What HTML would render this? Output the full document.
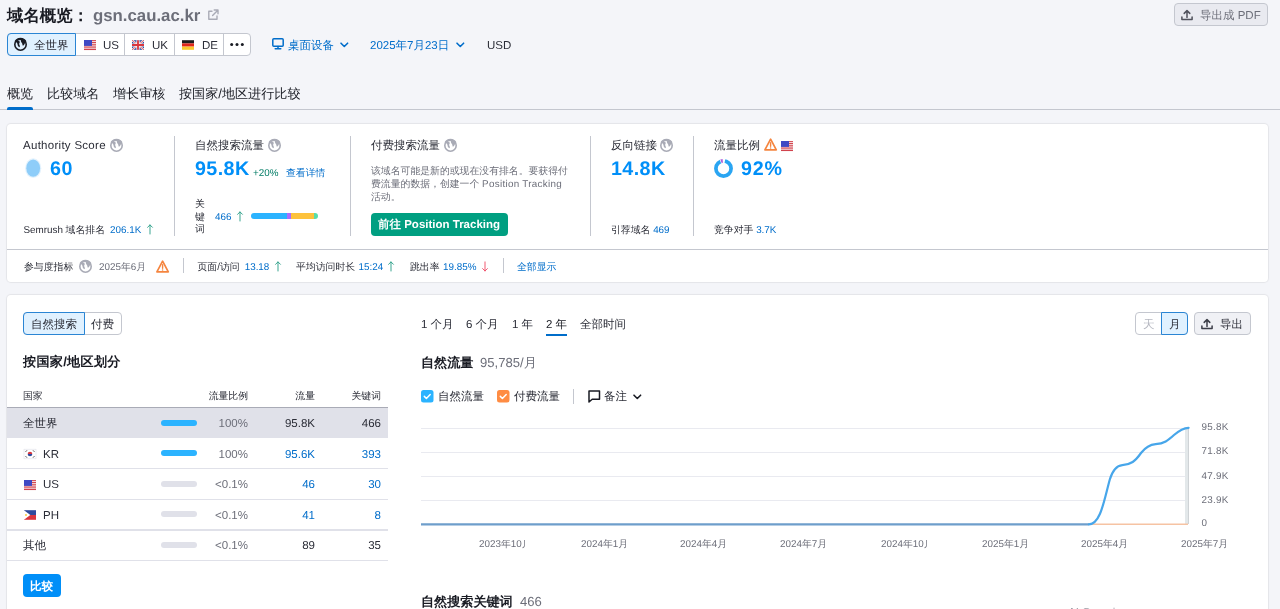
<!DOCTYPE html>
<html lang="zh">
<head>
<meta charset="utf-8">
<title>域名概览</title>
<style>
*{box-sizing:border-box;margin:0;padding:0}
html,body{width:1280px;height:609px;overflow:hidden;background:#f4f5f9}
body{will-change:transform;text-rendering:geometricPrecision;font-family:"Liberation Sans",sans-serif;color:#191b23;position:relative;font-size:11.5px}
.a{position:absolute;white-space:nowrap;line-height:1}
.card{position:absolute;background:#fff;border-radius:4px;box-shadow:0 0 1px 1px rgba(25,27,35,.07)}
.d{color:#2b2d37}
.g{color:#6c6e79}
.b{color:#006dca}
.bb{color:#008ff8;font-weight:bold;font-size:19.7px}
.vd{position:absolute;width:1px;background:#c4c7cf}
.hd{position:absolute;height:1px;background:#c4c7cf}
.up{color:#009f81}
.f14{font-size:11.5px}
.f12{font-size:9.85px}
svg{position:absolute;overflow:visible}
</style>
</head>
<body>

<!-- ===== header ===== -->
<div class="a" id="t1" style="left:7px;top:8px;font-size:16.4px;font-weight:bold">域名概览：</div>
<div class="a" id="t2" style="left:93px;top:8px;font-size:16.8px;font-weight:bold;color:#6c6e79">gsn.cau.ac.kr</div>

<!-- region buttons -->
<div class="a" id="rg" style="left:7px;top:33px;width:244px;height:23px;background:#fff;border:1px solid #c4c7cf;border-radius:4px"></div>
<div class="a" id="rg1" style="left:7px;top:33px;width:69px;height:23px;background:#e0f1ff;border:1px solid #2a85d4;border-radius:4px 0 0 4px"></div>
<div class="vd" style="left:124px;top:34px;height:21px"></div>
<div class="vd" style="left:174px;top:34px;height:21px"></div>
<div class="vd" style="left:223px;top:34px;height:21px"></div>
<div class="a d" style="left:34px;top:41px">全世界</div>
<div class="a d" style="left:103px;top:41px">US</div>
<div class="a d" style="left:152px;top:41px">UK</div>
<div class="a d" style="left:202px;top:41px">DE</div>

<div class="a b" style="left:288px;top:41px">桌面设备</div>
<div class="a b" style="left:370px;top:41px">2025年7月23日</div>
<div class="a d" style="left:487px;top:41px">USD</div>

<!-- export pdf -->
<div class="a" style="left:1174px;top:3px;width:94px;height:23px;background:#e9eaf0;border:1px solid #c4c7cf;border-radius:4px"></div>
<div class="a" style="left:1200px;top:11px;color:#6c6e79">导出成 PDF</div>

<!-- tabs -->
<div class="a" style="left:7px;top:87px;font-size:13.1px">概览</div>
<div class="a" style="left:47px;top:87px;font-size:13.1px">比较域名</div>
<div class="a" style="left:113px;top:87px;font-size:13.1px">增长审核</div>
<div class="a" style="left:179px;top:87px;font-size:13.1px">按国家/地区进行比较</div>
<div class="hd" style="left:0;top:109px;width:1280px;background:#c4c7cf"></div>
<div class="a" style="left:7px;top:107px;width:26px;height:3px;background:#006dca;border-radius:2px 2px 0 0"></div>

<!-- ===== card 1 ===== -->
<div class="card" style="left:7px;top:124px;width:1261px;height:158px"></div>
<div class="hd" style="left:7px;top:249px;width:1261px"></div>
<div class="vd" style="left:174px;top:136px;height:100px"></div>
<div class="vd" style="left:350px;top:136px;height:100px"></div>
<div class="vd" style="left:590px;top:136px;height:100px"></div>
<div class="vd" style="left:693px;top:136px;height:100px"></div>

<div class="a d" style="left:23px;top:141px;letter-spacing:.28px">Authority Score</div>
<div class="a bb" style="left:50px;top:160px;letter-spacing:.5px">60</div>
<div class="a d f12" style="left:23.5px;top:226px">Semrush 域名排名</div>
<div class="a b f12" style="left:110px;top:226px">206.1K</div>
<svg style="left:146.600px;top:224.400px;color:#2fa08a" width="6" height="10.500"><use href="#arr"/></svg>

<div class="a d" style="left:195px;top:141px">自然搜索流量</div>
<div class="a bb" style="left:195px;top:160px;letter-spacing:.4px">95.8K</div>
<div class="a f12" style="left:253px;top:169px;color:#007c65">+20%</div>
<div class="a b f12" style="left:286px;top:169px">查看详情</div>
<div class="a d f12" style="left:195px;top:199px;line-height:12.7px;white-space:normal;width:10px">关键词</div>
<div class="a b f12" style="left:215px;top:213px">466</div>
<svg style="left:237.200px;top:211.200px;color:#2fa08a" width="6" height="10.500"><use href="#arr"/></svg>
<div class="a" style="left:251px;top:213px;width:67px;height:6px;border-radius:3px;background:linear-gradient(90deg,#2bb3ff 0 54%,#ab6cfe 54% 60%,#fdc23c 60% 94%,#59ddaa 94%)"></div>

<div class="a d" style="left:371px;top:141px">付费搜索流量</div>
<div class="a g f12" style="left:371px;top:165px;line-height:13px;white-space:normal;width:215px">该域名可能是新的或现在没有排名。要获得付<br>费流量的数据，创建一个 <span style="letter-spacing:.3px">Position Tracking</span><br>活动。</div>
<div class="a" style="left:371px;top:213px;width:137px;height:23px;border-radius:4px;background:#009f81"></div>
<div class="a" style="left:378px;top:220px;font-size:11.5px;font-weight:bold;color:#fff">前往 Position Tracking</div>

<div class="a d" style="left:611px;top:141px">反向链接</div>
<div class="a bb" style="left:611px;top:160px;letter-spacing:.4px">14.8K</div>
<div class="a d f12" style="left:611px;top:226px">引荐域名 <span class="b">469</span></div>

<div class="a d" style="left:714px;top:141px">流量比例</div>
<div class="a bb" style="left:741px;top:160px;letter-spacing:.8px">92%</div>
<div class="a d f12" style="left:714px;top:226px">竞争对手 <span class="b">3.7K</span></div>

<!-- engagement row -->
<div class="a d f12" style="left:24px;top:263px">参与度指标</div>
<div class="a g f12" style="left:99px;top:263px">2025年6月</div>
<div class="vd" style="left:183px;top:258px;height:15px"></div>
<div class="a d f12" style="left:197.5px;top:263px">页面/访问</div>
<div class="a b f12" style="left:244.7px;top:263px">13.18</div>
<svg style="left:274.500px;top:261px;color:#2fa08a" width="6" height="10.500"><use href="#arr"/></svg>
<div class="a d f12" style="left:296px;top:263px">平均访问时长</div>
<div class="a b f12" style="left:358.5px;top:263px">15:24</div>
<svg style="left:388.400px;top:261px;color:#2fa08a" width="6" height="10.500"><use href="#arr"/></svg>
<div class="a d f12" style="left:410px;top:263px">跳出率</div>
<div class="a b f12" style="left:443px;top:263px">19.85%</div>
<svg style="left:482px;top:261px;color:#f0506a" width="6" height="10.500"><g transform="translate(0,10.900) scale(1,-1)"><use href="#arr"/></g></svg>
<div class="vd" style="left:503px;top:258px;height:15px"></div>
<div class="a b f12" style="left:517px;top:263px">全部显示</div>

<!-- ===== card 2 ===== -->
<div class="card" style="left:7px;top:295px;width:1261px;height:330px"></div>

<!-- left panel -->
<div class="a" style="left:23px;top:312px;width:99px;height:23px;background:#fff;border:1px solid #c4c7cf;border-radius:4px"></div>
<div class="a" style="left:23px;top:312px;width:62px;height:23px;background:#e0f1ff;border:1px solid #2a85d4;border-radius:4px 0 0 4px"></div>
<div class="a d" style="left:31px;top:320px">自然搜索</div>
<div class="a d" style="left:91px;top:320px">付费</div>
<div class="a" style="left:23px;top:355px;font-size:13.1px;font-weight:bold;letter-spacing:.3px">按国家/地区划分</div>

<div class="a d f12" style="left:23px;top:392px">国家</div>
<div class="a d f12" style="right:1032px;top:392px">流量比例</div>
<div class="a d f12" style="right:965px;top:392px">流量</div>
<div class="a d f12" style="right:899px;top:392px">关键词</div>

<div class="a" style="left:7px;top:408px;width:381px;height:30px;background:#e0e1e9"></div>
<div class="hd" style="left:7px;top:407px;width:381px;background:#a9abb6"></div>
<div class="hd" style="left:7px;top:468px;width:381px;background:#e0e1e9"></div>
<div class="hd" style="left:7px;top:499px;width:381px;background:#e0e1e9"></div>
<div class="hd" style="left:7px;top:529px;width:381px;height:2px;background:#e0e1e9"></div>
<div class="hd" style="left:7px;top:560px;width:381px;background:#e0e1e9"></div>

<!-- rows -->
<div class="a d" style="left:23px;top:419px">全世界</div>
<div class="a d" style="left:43px;top:450px">KR</div>
<div class="a d" style="left:43px;top:480px">US</div>
<div class="a d" style="left:43px;top:511px">PH</div>
<div class="a d" style="left:23px;top:541px">其他</div>

<div class="a" style="left:161px;top:420px;width:36px;height:6px;border-radius:3px;background:#2bb3ff"></div>
<div class="a" style="left:161px;top:450px;width:36px;height:6px;border-radius:3px;background:#2bb3ff"></div>
<div class="a" style="left:161px;top:481px;width:36px;height:6px;border-radius:3px;background:#e0e1e9"></div>
<div class="a" style="left:161px;top:511px;width:36px;height:6px;border-radius:3px;background:#e0e1e9"></div>
<div class="a" style="left:161px;top:542px;width:36px;height:6px;border-radius:3px;background:#e0e1e9"></div>

<div class="a g" style="right:1032px;top:419px">100%</div>
<div class="a g" style="right:1032px;top:450px">100%</div>
<div class="a g" style="right:1032px;top:480px">&lt;0.1%</div>
<div class="a g" style="right:1032px;top:511px">&lt;0.1%</div>
<div class="a g" style="right:1032px;top:541px">&lt;0.1%</div>

<div class="a d" style="right:965px;top:419px">95.8K</div>
<div class="a b" style="right:965px;top:450px">95.6K</div>
<div class="a b" style="right:965px;top:480px">46</div>
<div class="a b" style="right:965px;top:511px">41</div>
<div class="a d" style="right:965px;top:541px">89</div>

<div class="a d" style="right:899px;top:419px">466</div>
<div class="a b" style="right:899px;top:450px">393</div>
<div class="a b" style="right:899px;top:480px">30</div>
<div class="a b" style="right:899px;top:511px">8</div>
<div class="a d" style="right:899px;top:541px">35</div>

<div class="a" style="left:23px;top:574px;width:38px;height:23px;border-radius:4px;background:#008ff8"></div>
<div class="a" style="left:30px;top:582px;font-weight:bold;color:#fff">比较</div>

<!-- right panel -->
<div class="a d" style="left:421px;top:320px">1 个月</div>
<div class="a d" style="left:466px;top:320px">6 个月</div>
<div class="a d" style="left:512px;top:320px">1 年</div>
<div class="a" style="left:546px;top:320px">2 年</div>
<div class="a d" style="left:580px;top:320px">全部时间</div>
<div class="a" style="left:545.5px;top:333.5px;width:21.5px;height:2px;background:#006dca"></div>

<div class="a" style="left:1135px;top:312px;width:52.5px;height:23px;background:#fff;border:1px solid #c4c7cf;border-radius:4px"></div>
<div class="a" style="left:1161px;top:312px;width:26.5px;height:23px;background:#e0f1ff;border:1px solid #2a85d4;border-radius:0 4px 4px 0"></div>
<div class="a" style="left:1143px;top:320px;color:#b5b7c0">天</div>
<div class="a d" style="left:1169px;top:320px">月</div>
<div class="a" style="left:1194px;top:312px;width:57px;height:23px;background:#f0f1f5;border:1px solid #c4c7cf;border-radius:4px"></div>
<div class="a d" style="left:1220px;top:320px">导出</div>

<div class="a" style="left:421px;top:356px;font-size:13.1px;font-weight:bold">自然流量</div>
<div class="a g" style="left:480px;top:356px;font-size:13.1px">95,785/月</div>

<div class="a d" style="left:438px;top:392px">自然流量</div>
<div class="a d" style="left:514px;top:392px">付费流量</div>
<div class="vd" style="left:573px;top:389px;height:15px"></div>
<div class="a d" style="left:604px;top:392px">备注</div>

<!-- chart -->
<div class="hd" style="left:421px;top:428px;width:768px;background:#e9eaf0"></div>
<div class="hd" style="left:421px;top:452px;width:768px;background:#e9eaf0"></div>
<div class="hd" style="left:421px;top:476px;width:768px;background:#e9eaf0"></div>
<div class="hd" style="left:421px;top:500px;width:768px;background:#e9eaf0"></div>

<div class="a g f12" style="left:1201.5px;top:423px;letter-spacing:.3px">95.8K</div>
<div class="a g f12" style="left:1201.5px;top:447px;letter-spacing:.3px">71.8K</div>
<div class="a g f12" style="left:1201.5px;top:472px;letter-spacing:.3px">47.9K</div>
<div class="a g f12" style="left:1201.5px;top:496px;letter-spacing:.3px">23.9K</div>
<div class="a g f12" style="left:1201.5px;top:519px;letter-spacing:.3px">0</div>

<div class="a g f12" style="left:479px;top:540px;width:46px;height:12px;overflow:hidden">2023年10月</div>
<div class="a g f12" style="left:581px;top:540px">2024年1月</div>
<div class="a g f12" style="left:680px;top:540px">2024年4月</div>
<div class="a g f12" style="left:780px;top:540px">2024年7月</div>
<div class="a g f12" style="left:881px;top:540px;width:46px;height:12px;overflow:hidden">2024年10月</div>
<div class="a g f12" style="left:982px;top:540px">2025年1月</div>
<div class="a g f12" style="left:1081px;top:540px">2025年4月</div>
<div class="a g f12" style="left:1181px;top:540px">2025年7月</div>

<div class="a" style="left:421px;top:595px;font-size:13.1px;font-weight:bold">自然搜索关键词</div>
<div class="a g" style="left:520px;top:595px;font-size:13.1px">466</div>

<!-- ===== icons ===== -->
<svg width="0" height="0" style="left:0;top:0">
<defs>
<g id="globe">
  <circle cx="6.500" cy="6.500" r="5.700" fill="none" stroke="currentColor" stroke-width="1.600"/>
  <path d="M2 3.400C3.300 2.300 5.300 2.500 5.700 3.700C6 4.700 4.900 5.200 5.200 6.200C5.500 7.200 6.400 7.900 5.500 9.300C4.300 8.800 3.400 7.500 3.500 6.100C3.600 5 2.300 4.600 2 3.400z" fill="currentColor"/>
  <path d="M7 1.300C8.800 1.500 10.600 2.700 11.200 4.400C10.800 5.700 10.100 7.100 8.900 7.700C8.100 6.700 8.700 5.700 7.900 4.900C7.100 4.100 6.400 2.600 7 1.300z" fill="currentColor"/>
  <path d="M1.500 3.800A5.700 5.700 0 0 1 11.500 3.800" fill="none" stroke="currentColor" stroke-width="2.200"/>
</g>
<g id="us">
  <rect width="12" height="9.900" fill="#fff"/>
  <path d="M0 .650h12M0 2.450h12M0 4.250h12M0 6.050h12M0 7.850h12M0 9.550h12" stroke="#cc2f3a" stroke-width=".95"/>
  <rect width="8" height="5.900" fill="#3f49c4"/>
</g>
<g id="warn">
  <path d="M6.600 1.200L12.300 11.800H.9z" fill="#fff" stroke="#f5853f" stroke-width="1.700" stroke-linejoin="round"/>
  <path d="M6.600 4.800v3.400" stroke="#f5853f" stroke-width="1.400" stroke-linecap="round"/>
  <circle cx="6.600" cy="10" r=".8" fill="#f5853f"/>
</g>
<g id="arr">
  <path d="M3 10V.9M.6 3.300L3 .9l2.400 2.400" fill="none" stroke="currentColor" stroke-width=".950" stroke-linecap="round" stroke-linejoin="round"/>
</g>
<g id="exp">
  <path d="M6 8.500V1.800M3.200 4.400L6 1.600l2.800 2.800" fill="none" stroke="currentColor" stroke-width="1.500" stroke-linecap="round" stroke-linejoin="round"/>
  <path d="M.9 8v2.600h10.200V8" fill="none" stroke="currentColor" stroke-width="1.500" stroke-linecap="round" stroke-linejoin="round"/>
</g>
<g id="chev">
  <path d="M1 1.200l3.300 3.300 3.300-3.300" fill="none" stroke="currentColor" stroke-width="1.600" stroke-linecap="round" stroke-linejoin="round"/>
</g>
<g id="chk">
  <rect width="12.500" height="12.500" rx="2.500" fill="currentColor"/>
  <path d="M3.300 6.400l2.100 2.100 3.800-4" fill="none" stroke="#fff" stroke-width="1.500" stroke-linecap="round" stroke-linejoin="round"/>
</g>
</defs>
</svg>

<!-- header icons -->
<svg style="left:14px;top:38px;color:#191b23" width="13" height="13"><use href="#globe"/></svg>
<svg style="left:83.500px;top:39.900px" width="12" height="10"><use href="#us"/></svg>
<svg style="left:132.300px;top:40.200px" width="12" height="10" viewBox="0 0 12 9.600">
  <rect width="12" height="9.600" fill="#2e4a9e"/>
  <path d="M0 0l12 9.600M12 0L0 9.600" stroke="#fff" stroke-width="2"/>
  <path d="M0 0l12 9.600M12 0L0 9.600" stroke="#d9363e" stroke-width=".8"/>
  <path d="M6 0v9.600M0 4.800h12" stroke="#fff" stroke-width="3.200"/>
  <path d="M6 0v9.600M0 4.800h12" stroke="#d9363e" stroke-width="1.800"/>
</svg>
<svg style="left:182.200px;top:40.200px" width="12" height="10" viewBox="0 0 12 9.600">
  <rect width="12" height="3.200" fill="#1c1c1c"/><rect y="3.200" width="12" height="3.200" fill="#e0261c"/><rect y="6.400" width="12" height="3.200" fill="#f9c92d"/>
</svg>
<svg style="left:230px;top:43px" width="14" height="3"><circle cx="1.700" cy="1.500" r="1.500" fill="#191b23"/><circle cx="7" cy="1.500" r="1.500" fill="#191b23"/><circle cx="12.300" cy="1.500" r="1.500" fill="#191b23"/></svg>

<!-- external link -->
<svg style="left:206.500px;top:8.500px;color:#a9abb6" width="12" height="12" viewBox="0 0 12 12">
  <path d="M5 2.200H1.800v8H10V7" fill="none" stroke="currentColor" stroke-width="1.400" stroke-linejoin="round" stroke-linecap="round"/>
  <path d="M7.200 1h3.800v3.800M10.800 1.200L5.600 6.400" fill="none" stroke="currentColor" stroke-width="1.400" stroke-linejoin="round" stroke-linecap="round"/>
</svg>

<!-- monitor -->
<svg style="left:272px;top:38px;color:#006dca" width="12" height="12" viewBox="0 0 12 12">
  <rect x=".8" y=".8" width="10.400" height="7.400" rx="1" fill="none" stroke="currentColor" stroke-width="1.500"/>
  <path d="M6 8.500v1.800M3.200 10.800h5.600" stroke="currentColor" stroke-width="1.500" stroke-linecap="round"/>
</svg>
<svg style="left:340px;top:42px;color:#006dca" width="9" height="6"><use href="#chev"/></svg>
<svg style="left:456px;top:42px;color:#006dca" width="9" height="6"><use href="#chev"/></svg>

<!-- export pdf icon -->
<svg style="left:1181px;top:9px;color:#50525c" width="12" height="12"><use href="#exp"/></svg>
<!-- export icon -->
<svg style="left:1201px;top:318px;color:#3c3e48" width="12" height="12"><use href="#exp"/></svg>

<!-- gray globes -->
<svg style="left:110px;top:139px;color:#a9abb6" width="13" height="13"><use href="#globe"/></svg>
<svg style="left:268px;top:139px;color:#a9abb6" width="13" height="13"><use href="#globe"/></svg>
<svg style="left:444px;top:139px;color:#a9abb6" width="13" height="13"><use href="#globe"/></svg>
<svg style="left:660px;top:139px;color:#a9abb6" width="13" height="13"><use href="#globe"/></svg>
<svg style="left:79px;top:260px;color:#a9abb6" width="13" height="13"><use href="#globe"/></svg>

<!-- authority ellipse -->
<svg style="left:25px;top:158px" width="17" height="21" viewBox="0 0 17 21">
  <ellipse cx="8.200" cy="10.200" rx="8.100" ry="9.900" fill="#e3f2fd"/>
  <ellipse cx="8.200" cy="10.200" rx="6.900" ry="8.600" fill="#8ecdf9"/>
</svg>

<!-- donut -->
<svg style="left:714px;top:158.500px" width="19" height="19" viewBox="0 0 19 19">
  <circle cx="9.500" cy="9.500" r="7.600" fill="none" stroke="#2aa5f2" stroke-width="3.700"/>
  <path d="M10.900 2.030A7.600 7.600 0 0 0 6.400 2.560" fill="none" stroke="#fff" stroke-width="4.400"/>
  <path d="M8.800 1.930A7.600 7.600 0 0 0 7 2.320" fill="none" stroke="#b35fd9" stroke-width="3.700"/>
</svg>

<!-- warnings -->
<svg style="left:763.500px;top:138px" width="13" height="12"><use href="#warn"/></svg>
<svg style="left:156px;top:259.500px" width="13" height="12"><use href="#warn"/></svg>
<svg style="left:781px;top:140.500px" width="12" height="10"><use href="#us"/></svg>

<!-- table flags -->
<svg style="left:23.500px;top:449px" width="12" height="10" viewBox="0 0 12 9.600">
  <rect width="12" height="9.600" fill="#fff" stroke="#e0e1e9" stroke-width=".6"/>
  <path d="M3.700 4.800a2.300 2.300 0 0 1 4.600 0z" fill="#d9363e"/>
  <path d="M3.700 4.800a2.300 2.300 0 0 0 4.600 0z" fill="#2e4a9e"/>
  <path d="M1.600 2.600l1.300-1.400M9.100 1.200l1.300 1.400M1.600 7l1.300 1.400M9.100 8.400l1.300-1.400" stroke="#333" stroke-width=".9"/>
</svg>
<svg style="left:23.500px;top:479.500px" width="12" height="10"><use href="#us"/></svg>
<svg style="left:23.500px;top:510px" width="12" height="10" viewBox="0 0 12 9.600">
  <rect width="12" height="4.800" fill="#2e4a9e"/><rect y="4.800" width="12" height="4.800" fill="#d9363e"/>
  <path d="M0 0l6.300 4.800L0 9.600z" fill="#fff"/>
  <circle cx="2" cy="4.800" r=".9" fill="#f9c92d"/>
</svg>

<!-- checkboxes -->
<svg style="left:421px;top:389.500px;color:#2bb3ff" width="13" height="13"><use href="#chk"/></svg>
<svg style="left:497px;top:389.500px;color:#ff8c43" width="13" height="13"><use href="#chk"/></svg>
<!-- note icon -->
<svg style="left:588px;top:389.500px;color:#191b23" width="13" height="13" viewBox="0 0 13 13">
  <path d="M1 1h10.500v8.200H4.200L1 12z" fill="none" stroke="currentColor" stroke-width="1.500" stroke-linejoin="round"/>
</svg>
<svg style="left:633px;top:394px;color:#191b23" width="9" height="6"><use href="#chev"/></svg>

<!-- chart lines -->
<svg style="left:0;top:0" width="1280" height="609" viewBox="0 0 1280 609">
  <rect x="1185" y="428" width="4" height="96" fill="#e3e8ea"/>
  <rect x="1188" y="428" width="1" height="96" fill="#cfd3d6"/>
  <path d="M1089 524.300H1188" stroke="#f6c3a3" stroke-width="1.600" fill="none"/>
  <path d="M421 524.300H1089" stroke="#6e9ecb" stroke-width="2.200" fill="none"/>
  <path d="M1089 524.300C1100.500 524.300 1104 500.500 1109.800 479.500C1113 469 1117 465.600 1122.300 465.100C1131 464.500 1135 461.500 1141 453C1146 446.700 1150 444.700 1155.600 444.200C1164 443.600 1168 440.500 1174 435C1180 429.800 1184 428 1188.600 427.800" stroke="#47a6ea" stroke-width="2.200" fill="none" stroke-linecap="round"/>
</svg>

<div class="a" style="left:1068px;top:608px;font-size:11.500px;color:#9a9ca6">AI Overviews</div>
</body>
</html>
